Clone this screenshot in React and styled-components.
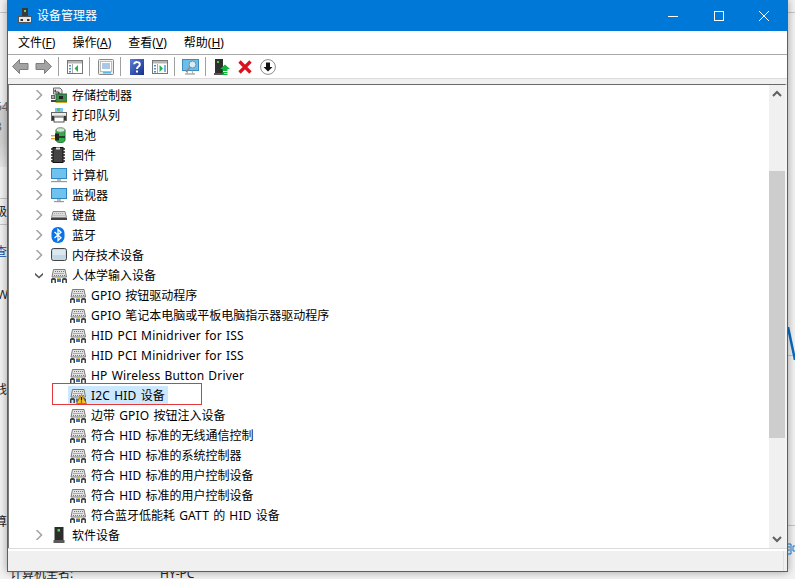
import React from 'react';
import styled, { createGlobalStyle } from 'styled-components';

const FONT = '"Noto Sans", "Noto Sans CJK SC", sans-serif';

const GlobalStyle = createGlobalStyle`
  html, body { margin: 0; padding: 0; background: #f0f0f0; }
  body { font-family: ${FONT}; font-size: 12px; color: #000; }
`;

// the page behind the window
const Desktop = styled.div`
  position: relative;
  width: 795px;
  height: 579px;
  overflow: hidden;
  background: #f2f2f2;
`;

const BackText = styled.span`
  position: absolute;
  left: ${p => p.$x}px;
  top: ${p => p.$y}px;
  font-size: 12px;
  line-height: 16px;
  white-space: nowrap;
  color: ${p => p.$color || '#222'};
`;

const BackLine = styled.div`
  position: absolute;
  left: ${p => p.$x}px;
  top: ${p => p.$y}px;
  width: ${p => p.$w}px;
  height: 1px;
  background: #c4c4c4;
`;

const BackSelect = styled.div`
  position: absolute;
  left: 0;
  top: 105px;
  width: 7px;
  height: 62px;
  background: linear-gradient(#cfcfcf 60%, #e6e6e6);
`;

const BackDrawing = styled.svg`
  position: absolute;
  left: 788px;
  top: ${p => p.$y}px;
  width: 7px;
`;

const Window = styled.div`
  position: absolute;
  left: 7px;
  top: 0;
  width: 781px;
  height: 572px;
  box-sizing: border-box;
  display: flex;
  flex-direction: column;
  background: #f0f0f0;
  border: 1px solid #0078d7;
  box-shadow: 0 0 8px rgba(0, 0, 0, 0.35);
`;

const TitleBar = styled.div`
  flex: none;
  height: 30px;
  display: flex;
  align-items: center;
  padding-left: 9px;
  padding-bottom: 1px;
  box-sizing: border-box;
  background: #0078d7;
  color: #fff;
`;

const TitleText = styled.span`
  margin-left: 4px;
  flex: 1;
  font-size: 12px;
  line-height: 16px;
`;

const WinButton = styled.div`
  width: 45.5px;
  height: 29px;
  display: flex;
  align-items: center;
  justify-content: center;
`;

const MenuBar = styled.div`
  flex: none;
  height: 24px;
  box-sizing: border-box;
  display: flex;
  align-items: center;
  padding-left: 2px;
  background: #fff;
  border-bottom: 1px solid #aaa;
`;

const MenuItem = styled.span`
  padding: 0 8px;
  margin-right: 1px;
  line-height: 22px;
  white-space: nowrap;
`;

const ToolBar = styled.div`
  flex: none;
  height: 23px;
  display: flex;
  align-items: center;
  padding-left: 1px;
  background: #fff;
`;

const ToolButton = styled.div`
  width: 23px;
  height: 23px;
  display: flex;
  align-items: center;
  justify-content: center;
`;

const ToolSep = styled.div`
  width: 1px;
  height: 19px;
  margin: 0 4px 0 3px;
  background: #a0a0a0;
`;

const ToolGap = styled.div`
  flex: none;
  height: 6px;
  background: #f0f0f0;
  border-top: 1px solid #dcdcdc;
  box-sizing: border-box;
`;

const Content = styled.div`
  flex: 1;
  min-height: 0;
  display: flex;
  background: #fff;
  border-top: 1px solid #696969;
  border-left: 1px solid #7a7a7a;
  border-right: 2px solid #f4f4f4;
`;

const Tree = styled.div`
  position: relative;
  flex: 1;
  overflow: hidden;
`;

const Row = styled.div`
  height: 20px;
  display: flex;
  align-items: center;
  padding-left: ${p => (p.$child ? 59 : 26)}px;
  white-space: nowrap;
`;

const Expander = styled.svg`
  flex: none;
  width: 8px;
  height: 10px;
  margin-right: 8px;
`;

const RowIcon = styled.span`
  position: relative;
  flex: none;
  width: 16px;
  height: 16px;
  display: block;
`;

const RowBody = styled.span`
  display: flex;
  align-items: center;
  height: 19px;
  padding: 0 ${p => (p.$child ? 3 : 0)}px 0 ${p => (p.$child ? 2 : 0)}px;
  background: ${p => (p.$selected ? '#cce8ff' : 'transparent')};
`;

const RowLabel = styled.span`
  margin-left: 5px;
  line-height: 19px;
`;

// latin in the original is a bit wider than Noto Sans
const LatinRun = styled.span`
  letter-spacing: 0.2px;
  word-spacing: 0.8px;
`;

// red frame someone drew on top of the screenshot
const RedMark = styled.div`
  position: absolute;
  left: 43px;
  top: 298px;
  width: 150px;
  height: 22px;
  box-sizing: border-box;
  border: 1px solid #e5383b;
  pointer-events: none;
`;

const ScrollBar = styled.div`
  flex: none;
  width: 16px;
  display: flex;
  flex-direction: column;
  background: #f0f0f0;
`;

const ScrollArrow = styled.div`
  flex: none;
  height: 17px;
  display: flex;
  align-items: center;
  justify-content: center;
`;

const ScrollTrack = styled.div`
  flex: 1;
  padding-top: 69px;
  padding-bottom: 93px;
  display: flex;
`;

const ScrollThumb = styled.div`
  flex: 1;
  background: #cdcdcd;
`;

const StatusBar = styled.div`
  flex: none;
  height: 23px;
  box-sizing: border-box;
  background: #f0f0f0;
  border-top: 1px solid #dadada;
  box-shadow: inset 0 2px 0 #fff, inset -3px 0 0 #f0f0f0, inset -4px 0 0 #dedede;
`;

const AppIcon = () => (
  <svg width="16" height="16" viewBox="0 0 16 16">
    <rect x="5" y="0" width="6" height="8" fill="#3a3a3a" />
    <rect x="7" y="2" width="2" height="2" fill="#5fd35f" />
    <rect x="1.5" y="8.5" width="13" height="6" fill="#e8e8e8" stroke="#555" strokeWidth="1" />
    <rect x="3.5" y="11" width="2.5" height="2" fill="#333" />
    <rect x="10" y="11" width="2.5" height="2" fill="#333" />
  </svg>
);

const Chevron = ({ open }) => (
  <Expander viewBox="0 0 8 10">
    {open
      ? <path d="M-1 3 L4 7.5 L9 3" fill="none" stroke="#595959" strokeWidth="1.6" />
      : <path d="M1.5 0 L6.5 5 L1.5 10" fill="none" stroke="#a6a6a6" strokeWidth="1.6" />}
  </Expander>
);

const ArrowIcon = ({ back }) => (
  <svg width="17" height="15" viewBox="0 0 17 15">
    <path
      d={back ? 'M0.5 7.5 L7.5 0.5 V4.5 H16 V10.5 H7.5 V14.5 Z' : 'M16.5 7.5 L9.5 0.5 V4.5 H1 V10.5 H9.5 V14.5 Z'}
      fill="#a3a3a3"
      stroke="#7d7d7d"
    />
  </svg>
);

const PaneIcon = ({ left }) => (
  <svg width="16" height="16" viewBox="0 0 16 16">
    <rect x="0.5" y="1.5" width="15" height="13" fill="#fff" stroke="#777" />
    <rect x="1" y="2" width="14" height="2.5" fill="#b5b5b5" />
    <rect x="2" y="6" width="2" height="1.5" fill="#4a90d9" />
    <rect x="2" y="9" width="2" height="1.5" fill="#4a90d9" />
    <rect x="2" y="12" width="2" height="1.5" fill="#4a90d9" />
    <line x1="5.5" y1="5" x2="5.5" y2="14" stroke="#aaa" />
    <path d={left ? 'M11 6 V13 L7.5 9.5 Z' : 'M7.5 6 V13 L11 9.5 Z'} fill="#22b14c" />
    {!left && <rect x="12" y="6" width="2" height="7" fill="#7fb2e5" />}
  </svg>
);

const SheetIcon = () => (
  <svg width="16" height="16" viewBox="0 0 16 16">
    <rect x="0.5" y="0.5" width="15" height="15" rx="1" fill="#eee" stroke="#888" />
    <rect x="2.5" y="2.5" width="11" height="10" fill="#fff" stroke="#bbb" />
    <path d="M4 5 H12 M4 7 H12 M4 9 H12" stroke="#5b8fc9" />
    <rect x="5" y="13" width="8" height="1.5" fill="#55b8e8" />
  </svg>
);

const HelpIcon = () => (
  <svg width="14" height="16" viewBox="0 0 14 16">
    <defs>
      <linearGradient id="helpBg" x1="0" y1="0" x2="1" y2="1">
        <stop offset="0" stopColor="#5c7fd6" />
        <stop offset="1" stopColor="#142f8a" />
      </linearGradient>
    </defs>
    <rect width="14" height="16" fill="url(#helpBg)" />
    <path d="M4.2 5.2 C4.2 2.4 9.8 2.4 9.8 5.4 C9.8 7.6 7 7.4 7 10" fill="none" stroke="#fff" strokeWidth="2" />
    <rect x="6" y="11.5" width="2" height="2" fill="#fff" />
  </svg>
);

const ScanIcon = () => (
  <svg width="17" height="17" viewBox="0 0 17 17">
    <rect x="0.5" y="1.5" width="16" height="11" fill="#6dbde9" stroke="#3a8cc2" />
    <path d="M3 16 H13" stroke="#999" strokeWidth="1.2" />
    <path d="M6 12.5 L5 16 M10 12.5 L11 16" stroke="#aaa" />
    <circle cx="10.5" cy="6.5" r="3.5" fill="#d5eefa" stroke="#8a8a8a" />
    <path d="M8 9 L4 14" stroke="#8a8a8a" strokeWidth="1.5" />
  </svg>
);

const UpdateIcon = () => (
  <svg width="16" height="16" viewBox="0 0 16 16">
    <rect x="1" y="0" width="8" height="14" fill="#2f2f2f" />
    <rect x="3" y="2" width="2" height="2" fill="#48d048" />
    <rect x="0" y="14" width="10" height="2" fill="#555" />
    <path d="M11 5.5 L16 10 H13.5 V12 H8.5 V10 H6 Z" fill="#12b53a" />
    <rect x="8.5" y="13" width="5" height="1.2" fill="#12b53a" />
    <rect x="8.5" y="14.8" width="5" height="1.2" fill="#12b53a" />
  </svg>
);

const RemoveIcon = () => (
  <svg width="14" height="14" viewBox="0 0 14 14">
    <path d="M1.5 1.5 L12.5 12.5 M12.5 1.5 L1.5 12.5" stroke="#d9121f" strokeWidth="3.2" />
  </svg>
);

const DownCircleIcon = () => (
  <svg width="16" height="16" viewBox="0 0 16 16">
    <circle cx="8" cy="8" r="7.4" fill="#fff" stroke="#8c8c8c" />
    <path d="M6 3.5 H10 V8 H12.5 L8 12.5 L3.5 8 H6 Z" fill="#111" />
  </svg>
);

const StorageIcon = () => (
  <svg width="16" height="16" viewBox="0 0 16 16">
    <path d="M2.5 1 H9 L11 3 V7 H2.5 Z" fill="#e6e6e6" stroke="#6a6a6a" />
    <path d="M5 3 C3.5 3 3.5 5 5 5 H7 C8.5 5 8.5 7 7 7" fill="none" stroke="#333" strokeWidth="1.2" />
    <rect x="0.5" y="8.5" width="3" height="3" fill="#aaa" stroke="#666" />
    <rect x="5" y="7" width="11" height="8" fill="#3f8f4e" stroke="#2a6a38" />
    <rect x="8" y="9" width="4" height="3" fill="#222" />
    <rect x="5" y="15" width="11" height="1" fill="#d4a72c" />
    <rect x="0" y="13" width="5" height="2" fill="#444" />
  </svg>
);

const PrinterIcon = () => (
  <svg width="16" height="16" viewBox="0 0 16 16">
    <rect x="4" y="1" width="8" height="5" fill="#7cc4ea" />
    <rect x="6" y="1" width="3" height="3" fill="#5fbf6a" />
    <rect x="0.5" y="5.5" width="15" height="8" fill="#c8c8c8" stroke="#666" />
    <rect x="1" y="6" width="14" height="2" fill="#ececec" />
    <rect x="3" y="10" width="10" height="5" fill="#fff" stroke="#555" />
    <rect x="1" y="9" width="2" height="4" fill="#333" />
    <rect x="13" y="9" width="2" height="4" fill="#333" />
  </svg>
);

const BatteryIcon = () => (
  <svg width="16" height="16" viewBox="0 0 16 16">
    <path d="M5 3 V13 C5 16.5 14 16.5 14 13 V3" fill="#2fae4a" stroke="#1c7a33" />
    <path d="M5 3 C5 0 14 0 14 3 C14 6 5 6 5 3 Z" fill="#cfe8d2" stroke="#6a8a6e" />
    <rect x="0" y="8" width="5" height="1.4" fill="#d8a520" />
    <rect x="0" y="11" width="5" height="1.4" fill="#d8a520" />
    <path d="M4 6.5 H8 V13.5 H4 Z" fill="#222" />
    <path d="M8 10 H14" stroke="#222" strokeWidth="1.6" />
  </svg>
);

const ChipIcon = () => (
  <svg width="14" height="16" viewBox="0 0 14 16">
    <path d="M0 2 H2 M0 5 H2 M0 8 H2 M0 11 H2 M0 14 H2 M12 2 H14 M12 5 H14 M12 8 H14 M12 11 H14 M12 14 H14" stroke="#222" strokeWidth="1.4" />
    <rect x="2" y="0.5" width="10" height="15" fill="#444" stroke="#111" />
    <rect x="5" y="0.5" width="4" height="2" fill="#ddd" />
  </svg>
);

const ScreenIcon = ({ stand }) => (
  <svg width="16" height="16" viewBox="0 0 16 16">
    <rect x="0.5" y="1.5" width="15" height="10" fill="#6fc1ee" stroke="#2f86bf" />
    <path d="M6 12 H10 V14 H6 Z" fill="#b9b9b9" />
    <rect x={stand ? 0 : 3} y="14" width={stand ? 16 : 10} height="1.2" fill="#9a9a9a" />
  </svg>
);

const KeyboardIcon = () => (
  <svg width="16" height="16" viewBox="0 0 16 16">
    <path d="M2 4.5 H14 L15.5 10.5 H0.5 Z" fill="#dcdcdc" stroke="#8a8a8a" />
    <path d="M3 6.5 H13 M2.5 8.5 H13.5" stroke="#a8a8a8" strokeDasharray="1 1" />
    <rect x="0" y="11" width="16" height="2" fill="#444" />
  </svg>
);

const BluetoothIcon = () => (
  <svg width="14" height="16" viewBox="0 0 14 16">
    <rect x="0.5" y="0" width="13" height="16" rx="6" fill="#0a74e6" />
    <path d="M3.5 5 L10 10.8 L7 13.5 V2.5 L10 5.2 L3.5 11" fill="none" stroke="#fff" strokeWidth="1.3" />
  </svg>
);

const MemoryIcon = () => (
  <svg width="16" height="16" viewBox="0 0 16 16">
    <rect x="0.5" y="1.5" width="15" height="12" rx="2" fill="#c3d7e4" stroke="#444" />
    <rect x="2" y="3" width="12" height="5" fill="#dbe8f0" />
  </svg>
);

const DeviceIcon = () => (
  <svg width="16" height="16" viewBox="0 0 16 16">
    <rect x="3.5" y="0" width="9" height="13" fill="#2c2c2c" />
    <rect x="6.5" y="2" width="2.5" height="2.5" fill="#3fe04f" />
    <rect x="2.5" y="13" width="11" height="3" fill="#5a5a5a" />
  </svg>
);

const HidIcon = () => (
  <svg width="16" height="16" viewBox="0 0 16 16">
    <path d="M2.5 2.5 H14 L15.5 10 H1 Z" fill="#e2e2e2" stroke="#7a7a7a" />
    <path d="M4 4.5 H13 M3.5 6.5 H13.5 M3 8.5 H14" stroke="#777" strokeDasharray="1 1" />
    <path d="M0 16 V12.5 C0 10.5 5 10.5 5 12.5 V16 H3.5 V13 H1.5 V16 Z" fill="#444" />
    <path d="M11 16 V12.5 C11 10.5 16 10.5 16 12.5 V16 H14.5 V13 H12.5 V16 Z" fill="#444" />
    <path d="M6 15 V12 C6 10.5 10 10.5 10 12 V15 Z" fill="#3f78b5" />
    <rect x="7" y="10" width="2" height="2" fill="#e0b93a" />
  </svg>
);

const WarnBadge = styled.svg`
  position: absolute;
  right: -1px;
  bottom: -1px;
  width: 11px;
  height: 10px;
`;

const WarnIcon = () => (
  <WarnBadge viewBox="0 0 11 10">
    <path d="M5.5 0.5 L10.5 9.5 H0.5 Z" fill="#f7c52b" stroke="#9a6a00" strokeWidth="0.8" />
    <path d="M5.5 3 V6.6 M5.5 7.4 V8.6" stroke="#111" strokeWidth="1.2" />
  </WarnBadge>
);

const topRowsBefore = [
  { name: '存储控制器', Icon: StorageIcon },
  { name: '打印队列', Icon: PrinterIcon },
  { name: '电池', Icon: BatteryIcon },
  { name: '固件', Icon: ChipIcon },
  { name: '计算机', Icon: () => <ScreenIcon stand /> },
  { name: '监视器', Icon: ScreenIcon },
  { name: '键盘', Icon: KeyboardIcon },
  { name: '蓝牙', Icon: BluetoothIcon },
  { name: '内存技术设备', Icon: MemoryIcon },
];

const hidRows = [
  { name: 'GPIO 按钮驱动程序' },
  { name: 'GPIO 笔记本电脑或平板电脑指示器驱动程序' },
  { name: 'HID PCI Minidriver for ISS' },
  { name: 'HID PCI Minidriver for ISS' },
  { name: 'HP Wireless Button Driver' },
  { name: 'I2C HID 设备', selected: true },
  { name: '边带 GPIO 按钮注入设备' },
  { name: '符合 HID 标准的无线通信控制' },
  { name: '符合 HID 标准的系统控制器' },
  { name: '符合 HID 标准的用户控制设备' },
  { name: '符合 HID 标准的用户控制设备' },
  { name: '符合蓝牙低能耗 GATT 的 HID 设备' },
];

const menus = [
  ['文件(', 'F', ')'],
  ['操作(', 'A', ')'],
  ['查看(', 'V', ')'],
  ['帮助(', 'H', ')'],
];

// split a name into latin runs (spaced out) and the cjk text around them
const splitLatin = name =>
  name.split(/([A-Za-z0-9 ]+)/).map((part, i) =>
    i % 2 ? <LatinRun key={i}>{part}</LatinRun> : part
  );

function TopRow({ name, Icon, open }) {
  return (
    <Row>
      <Chevron open={open} />
      <RowBody>
        <RowIcon><Icon /></RowIcon>
        <RowLabel>{name}</RowLabel>
      </RowBody>
    </Row>
  );
}

function App() {
  return (
    <>
      <GlobalStyle />
      <Desktop>
        <BackLine $x={0} $y={12} $w={7} />
        <BackSelect />
        <BackLine $x={0} $y={198} $w={7} />
        <BackLine $x={0} $y={224} $w={7} />
        <BackText $x={-5} $y={99} $color="#666">54</BackText>
        <BackText $x={-5} $y={119} $color="#666">3</BackText>
        <BackText $x={-5} $y={204}>级</BackText>
        <BackText $x={-5} $y={244} $color="#0a4fa8">查</BackText>
        <BackText $x={-3} $y={287}>Wi</BackText>
        <BackText $x={-5} $y={382}>线</BackText>
        <BackText $x={-5} $y={514}>算</BackText>
        <BackLine $x={788} $y={12} $w={7} />
        <BackLine $x={788} $y={355} $w={7} />
        <BackLine $x={788} $y={525} $w={7} />
        <BackDrawing $y={327} height="33" viewBox="0 0 7 33">
          <path d="M0 0 L7 33" stroke="#0a6cc4" strokeWidth="2.5" />
        </BackDrawing>
        <BackDrawing $y={543} height="12" viewBox="0 0 7 12">
          <path d="M0 1 H3 V11 H0 M0 4 H2 M0 7 H2 M5 3 H7 M5 3 V8 H7" fill="none" stroke="#1a78d0" />
        </BackDrawing>
        <BackText $x={10} $y={566}>计算机全名:</BackText>
        <BackText $x={160} $y={566}>HY-PC</BackText>

        <Window>
          <TitleBar>
            <AppIcon />
            <TitleText>设备管理器</TitleText>
            <WinButton>
              <svg width="10" height="10" viewBox="0 0 10 10"><path d="M0 5.5 H10" stroke="#fff" /></svg>
            </WinButton>
            <WinButton>
              <svg width="10" height="10" viewBox="0 0 10 10"><rect x="0.5" y="0.5" width="9" height="9" fill="none" stroke="#fff" /></svg>
            </WinButton>
            <WinButton>
              <svg width="10" height="10" viewBox="0 0 10 10"><path d="M0 0 L10 10 M10 0 L0 10" stroke="#fff" /></svg>
            </WinButton>
          </TitleBar>

          <MenuBar>
            {menus.map(([before, key, after]) => (
              <MenuItem key={key}>{before}<u>{key}</u>{after}</MenuItem>
            ))}
          </MenuBar>

          <ToolBar>
            <ToolButton><ArrowIcon back /></ToolButton>
            <ToolButton><ArrowIcon /></ToolButton>
            <ToolSep />
            <ToolButton><PaneIcon left /></ToolButton>
            <ToolSep />
            <ToolButton><SheetIcon /></ToolButton>
            <ToolSep />
            <ToolButton><HelpIcon /></ToolButton>
            <ToolButton><PaneIcon /></ToolButton>
            <ToolSep />
            <ToolButton><ScanIcon /></ToolButton>
            <ToolSep />
            <ToolButton><UpdateIcon /></ToolButton>
            <ToolButton><RemoveIcon /></ToolButton>
            <ToolButton><DownCircleIcon /></ToolButton>
          </ToolBar>
          <ToolGap />

          <Content>
            <Tree>
              {topRowsBefore.map(r => <TopRow key={r.name} name={r.name} Icon={r.Icon} />)}
              <TopRow name="人体学输入设备" Icon={HidIcon} open />
              {hidRows.map((r, i) => (
                <Row key={i} $child>
                  <RowBody $child $selected={r.selected}>
                    <RowIcon>
                      <HidIcon />
                      {r.selected && <WarnIcon />}
                    </RowIcon>
                    <RowLabel>{splitLatin(r.name)}</RowLabel>
                  </RowBody>
                </Row>
              ))}
              <TopRow name="软件设备" Icon={DeviceIcon} />
              <RedMark />
            </Tree>
            <ScrollBar>
              <ScrollArrow>
                <svg width="10" height="7" viewBox="0 0 10 7"><path d="M1 6 L5 2 L9 6" fill="none" stroke="#606060" strokeWidth="2" /></svg>
              </ScrollArrow>
              <ScrollTrack><ScrollThumb /></ScrollTrack>
              <ScrollArrow>
                <svg width="10" height="7" viewBox="0 0 10 7"><path d="M1 1 L5 5 L9 1" fill="none" stroke="#606060" strokeWidth="2" /></svg>
              </ScrollArrow>
            </ScrollBar>
          </Content>
          <StatusBar />
        </Window>
      </Desktop>
    </>
  );
}

export default App;
